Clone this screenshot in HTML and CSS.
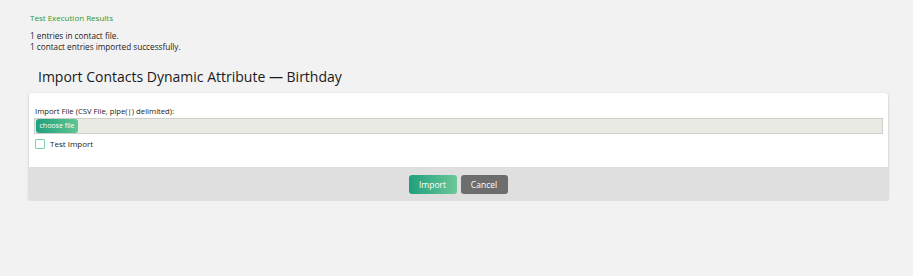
FILE: index.html
```html
<!DOCTYPE html>
<html lang="en">
<head>
    <meta charset="UTF-8">
    <title>Import Contacts Dynamic Attribute</title>
    <link rel="stylesheet" href="styles.css">
</head>
<body>
    <div class="page">
        <div class="results">
            <h4>Test Execution Results</h4>
            <p>1 entries in contact file.<br>1 contact entries imported successfully.</p>
        </div>

        <h2 class="title">Import Contacts Dynamic Attribute — Birthday</h2>

        <form class="card">
            <div class="card-body">
                <label class="field-label" for="importFile">Import File (CSV File, pipe(|) delimited):</label>
                <div class="file-input">
                    <span class="file-btn">choose file</span>
                </div>
                <label class="check">
                    <span class="check-box"></span>
                    <span>Test Import</span>
                </label>
            </div>
            <div class="card-footer">
                <button type="button" class="btn btn-primary">Import</button>
                <button type="button" class="btn btn-cancel">Cancel</button>
            </div>
        </form>
    </div>
</body>
</html>
```

FILE: styles.css
```css
body {
    margin: 0;
    background-color: #f2f2f2;
    font-family: "Open Sans", Arial, sans-serif;
    color: #222;
}
.page {
    padding: 12px 25px 0 29px;
}
.results h4 {
    margin: 0 0 0 1px;
    font-size: 8px;
    font-weight: normal;
    color: #2f982f;
    line-height: 11px;
}
.results p {
    margin: 7px 0 0 1px;
    font-size: 8.2px;
    line-height: 11px;
}
.title {
    margin: 14px 0 0 9px;
    font-size: 14px;
    font-weight: normal;
    line-height: 22px;
    color: #1a1a1a;
}
.card {
    margin-top: 5px;
    background-color: #fff;
    border-radius: 3px;
    box-shadow: 0 1px 3px rgba(0, 0, 0, 0.2);
    overflow: hidden;
}
.card-body {
    padding: 13px 5px 18px 5px;
}
.field-label {
    display: block;
    font-size: 7.7px;
    line-height: 10px;
    margin-left: 1px;
}
.file-input {
    display: flex;
    align-items: center;
    margin-top: 2px;
    height: 14px;
    padding: 0 1px;
    background-color: #eaeae5;
    border: 1px solid #cfcfca;
}
.file-btn {
    width: 42px;
    height: 14px;
    line-height: 14px;
    text-align: center;
    font-size: 7px;
    color: #fff;
    border-radius: 3px;
    background: linear-gradient(to right, #1fa07e, #5fc593);
}
.check {
    display: flex;
    align-items: center;
    margin-top: 5px;
    font-size: 8px;
    line-height: 10px;
}
.check-box {
    width: 8px;
    height: 8px;
    border: 1px solid #7fcfa7;
    border-radius: 1px;
    margin-right: 5px;
    margin-left: 1px;
}
.card-footer {
    background-color: #dfdfdf;
    height: 34px;
    display: flex;
    justify-content: center;
    align-items: center;
    gap: 5px;
}
.btn {
    border: none;
    border-radius: 3px;
    color: #fff;
    font-family: "Open Sans", Arial, sans-serif;
    font-size: 8.5px;
    width: 48px;
    height: 19px;
    padding: 0;
    margin-left: -1px;
}
.btn-primary {
    background: linear-gradient(to right, #1fa07e, #6cc797);
}
.btn-cancel {
    background-color: #6d6d6d;
    width: 47px;
}
```
